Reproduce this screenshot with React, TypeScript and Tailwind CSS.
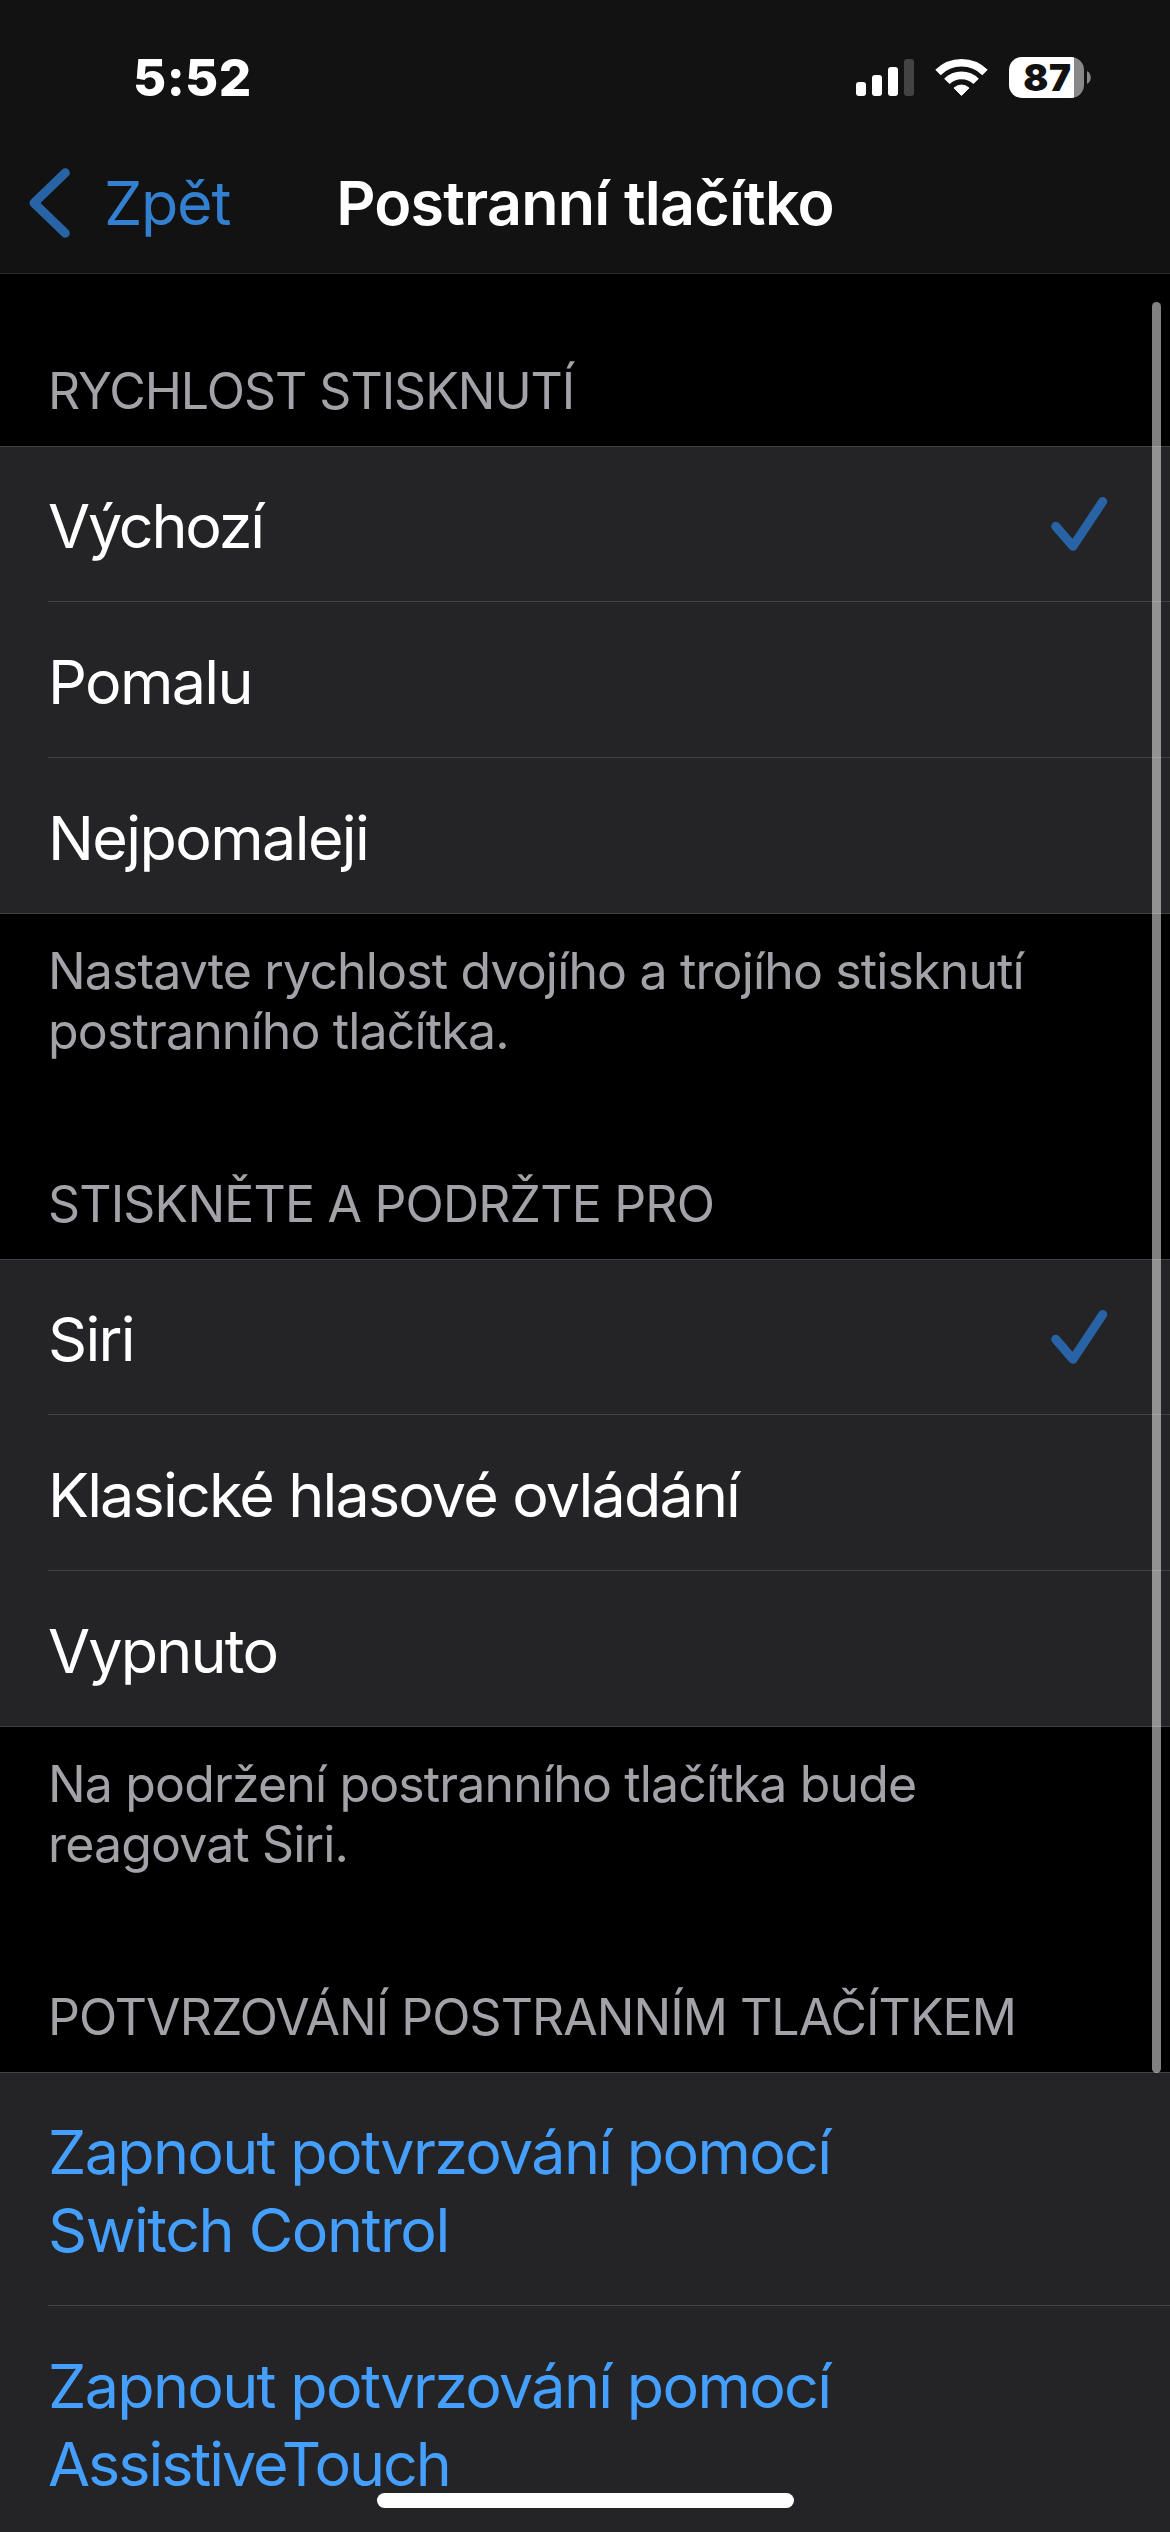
import React, { useState } from 'react';

type Item = { label: string; tracking: string };

const speeds: Item[] = [
  { label: 'Výchozí', tracking: 'tracking-[-2.2px]' },
  { label: 'Pomalu', tracking: 'tracking-[-1.65px]' },
  { label: 'Nejpomaleji', tracking: 'tracking-[-1.6px]' },
];

const holdActions: Item[] = [
  { label: 'Siri', tracking: 'tracking-[-1.7px]' },
  { label: 'Klasické hlasové ovládání', tracking: 'tracking-[-1.82px]' },
  { label: 'Vypnuto', tracking: 'tracking-[-1.8px]' },
];

const StatusBar = () => (
  <div className="flex h-[155px] items-center pl-[133px] pr-[79px]">
    <span className="text-[51px] font-extrabold leading-none tracking-[0.4px] text-white">5:52</span>
    <div className="ml-auto flex items-center">
      <svg width="58" height="37" viewBox="0 0 58 37" fill="white">
        <rect x="0" y="23" width="10" height="14" rx="3" />
        <rect x="16" y="16" width="10" height="21" rx="3" />
        <rect x="32" y="8" width="10" height="29" rx="3" />
        <rect x="48" y="0" width="10" height="37" rx="3" fill="#434343" />
      </svg>
      <svg className="ml-[22px] overflow-visible" width="51" height="37" viewBox="0 0 51 37">
        <path d="M2 13.5 A33.2 33.2 0 0 1 49 13.5" fill="none" stroke="white" strokeWidth="7.6" />
        <path d="M10.9 22.4 A20.6 20.6 0 0 1 40.1 22.4" fill="none" stroke="white" strokeWidth="7.6" />
        <path d="M25.5 36.5 L18 29 A11 11 0 0 1 33 29 Z" fill="white" stroke="white" strokeLinejoin="round" />
      </svg>
      <div className="ml-[22px] flex h-[41px] w-[75px] items-center justify-center rounded-[13px] bg-linear-to-r from-white from-[65px] to-[#888888] to-[65px]">
        <span className="pl-[2px] text-[37px] font-black leading-[41px] tracking-[0.6px] text-[#121212]">87</span>
      </div>
      <svg className="ml-[3px]" width="4" height="13" viewBox="0 0 4 13">
        <path d="M0 0 A7.5 7.5 0 0 1 0 13 Z" fill="#888888" />
      </svg>
    </div>
  </div>
);

const NavBar = () => (
  <div className="grid h-[96px] grid-cols-[1fr_auto_1fr] items-center">
    <button className="flex items-center pl-[29px]">
      <svg width="41" height="70" viewBox="0 0 41 70" fill="none" stroke="#2864a5" strokeWidth="9" strokeLinecap="round" strokeLinejoin="round">
        <path d="M36.3 4.8 L5 35 L36.3 65.2" />
      </svg>
      <span className="ml-[34px] text-[61px] leading-none tracking-[-1.3px] text-[#3380d1]">Zpět</span>
    </button>
    <h1 className="whitespace-nowrap text-[61px] font-semibold leading-none tracking-[-0.8px] text-white">Postranní tlačítko</h1>
  </div>
);

const Caption = ({ children, className }: { children: string; className: string }) => (
  <h2 className={`px-[48px] pb-[25px] text-[50px] leading-[60px] text-[#a3a2a9] ${className}`}>{children}</h2>
);

const Footer = ({ children }: { children: string }) => (
  <p className="whitespace-pre-line px-[48px] pt-[27px] text-[50px] leading-[60px] tracking-[-0.85px] text-[#a3a2a9]">{children}</p>
);

const CheckMark = () => (
  <svg width="57" height="54" viewBox="0 0 57 54" fill="none" stroke="#2864a5" strokeWidth="9" strokeLinecap="round" strokeLinejoin="round">
    <path d="M4.7 29.3 L22 49.3 L51.7 4.5" />
  </svg>
);

const OptionList = ({ items }: { items: Item[] }) => {
  const [selected, setSelected] = useState(items[0].label);
  return (
    <ul className="border-y border-[#414143] bg-[#242426] pl-[48px]">
      {items.map(({ label, tracking }) => (
        <li
          key={label}
          onClick={() => setSelected(label)}
          className="flex h-[156px] items-center justify-between border-b border-[#414143] pr-[62px] first:h-[155px] last:h-[155px] last:border-b-0"
        >
          <span className={`pt-1 text-[61px] leading-[78px] text-white ${tracking}`}>{label}</span>
          {selected === label && <CheckMark />}
        </li>
      ))}
    </ul>
  );
};

const LinkRow = ({ lines }: { lines: Item[] }) => (
  <li className="flex h-[233px] flex-col border-b border-[#414143] pt-[40px] last:border-b-0 last:pt-[41px]">
    {lines.map(({ label, tracking }) => (
      <span key={label} className={`text-[61px] leading-[78px] text-[#459fff] ${tracking}`}>{label}</span>
    ))}
  </li>
);

export default function App() {
  return (
    <div className="relative h-[2532px] w-[1170px] overflow-hidden bg-black font-['Inter',sans-serif]">
      <header className="h-[274px] border-b border-[#2a2a2b] bg-[#121212]">
        <StatusBar />
        <NavBar />
      </header>

      <main>
        <Caption className="pt-[87px] tracking-[-1.01px]">RYCHLOST STISKNUTÍ</Caption>
        <OptionList items={speeds} />
        <Footer>{'Nastavte rychlost dvojího a trojího stisknutí\npostranního tlačítka.'}</Footer>

        <Caption className="pt-[113px] tracking-[-0.81px]">STISKNĚTE A PODRŽTE PRO</Caption>
        <OptionList items={holdActions} />
        <Footer>{'Na podržení postranního tlačítka bude\nreagovat Siri.'}</Footer>

        <Caption className="pt-[113px] tracking-[-0.95px]">POTVRZOVÁNÍ POSTRANNÍM TLAČÍTKEM</Caption>
        <ul className="h-[460px] border-t border-[#414143] bg-[#242426] pl-[48px]">
          <LinkRow
            lines={[
              { label: 'Zapnout potvrzování pomocí', tracking: 'tracking-[-1.68px]' },
              { label: 'Switch Control', tracking: 'tracking-[-1.5px]' },
            ]}
          />
          <LinkRow
            lines={[
              { label: 'Zapnout potvrzování pomocí', tracking: 'tracking-[-1.68px]' },
              { label: 'AssistiveTouch', tracking: 'tracking-[-2.03px]' },
            ]}
          />
        </ul>
      </main>

      {/* scroll indicator */}
      <div className="absolute right-[9px] top-[302px] h-[1771px] w-[9px] rounded-full bg-white/50" />
      {/* home indicator */}
      <div className="absolute bottom-[24px] left-[377px] h-[15px] w-[417px] rounded-full bg-white" />
    </div>
  );
}
